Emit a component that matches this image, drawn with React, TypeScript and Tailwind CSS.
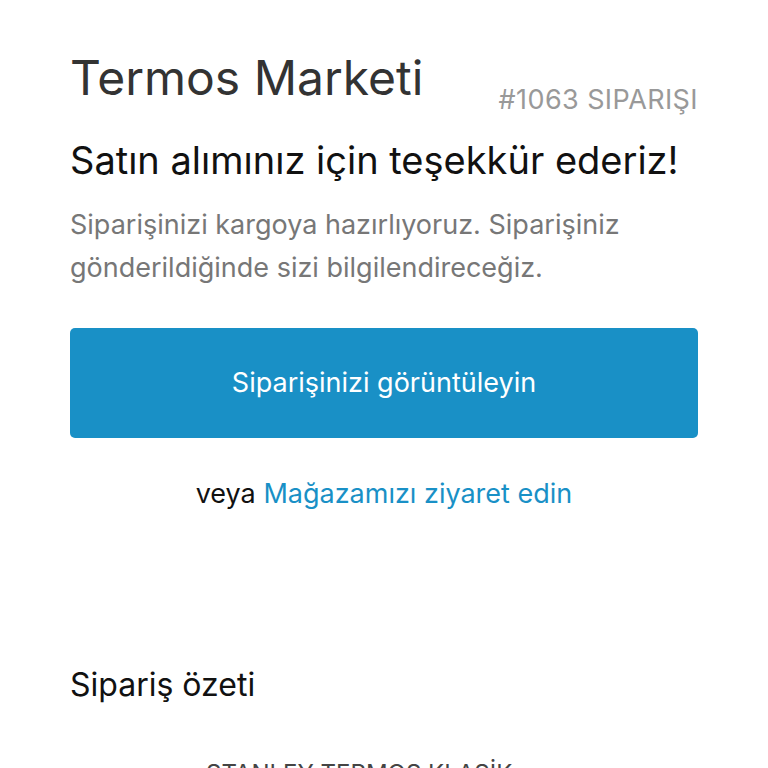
export default function App() {
  return (
    <div className="h-[768px] w-[768px] overflow-hidden bg-white font-['Inter',sans-serif]">
      <div className="px-[70px] pt-[50px]">
        {/* Header */}
        <div className="flex items-start justify-between">
          <h1 className="text-[48px] leading-[56px] text-[#333333]">Termos Marketi</h1>
          <p className="mt-[35px] text-[27px] leading-[30px] tracking-[0.4px] text-[#999999]">#1063 SIPARIŞI</p>
        </div>

        <h2 className="mt-[23px] text-[38px] leading-[44px] text-[#111111]">Satın alımınız için teşekkür ederiz!</h2>
        <p className="mt-[21px] text-[27px] leading-[43px] text-[#777777]">
          Siparişinizi kargoya hazırlıyoruz. Siparişiniz gönderildiğinde sizi bilgilendireceğiz.
        </p>

        <button className="mt-[39px] flex h-[110px] w-full items-center justify-center rounded-[5px] bg-[#1990c6] text-[27px] text-white">
          Siparişinizi görüntüleyin
        </button>

        <p className="mt-[38px] text-center text-[27px] leading-[36px] text-[#111111]">
          veya <span className="text-[#1990c6]">Mağazamızı ziyaret edin</span>
        </p>

        <h3 className="mt-[153px] text-[32px] leading-[40px] text-[#111111]">Sipariş özeti</h3>

        <p className="mt-[54px] pl-[136px] text-[24px] leading-[30px] text-[#444444]">STANLEY TERMOS KLASİK</p>
      </div>
    </div>
  );
}
